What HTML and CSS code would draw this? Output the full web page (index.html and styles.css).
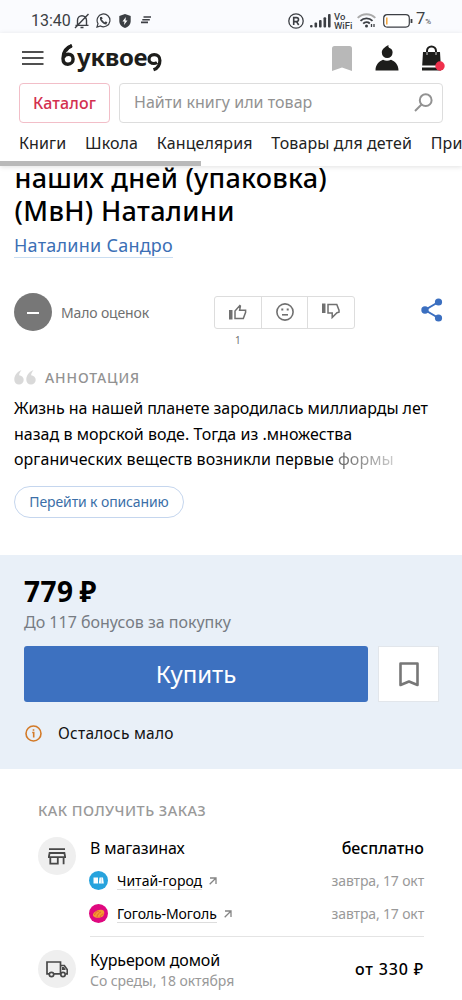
FILE: index.html
```html
<!DOCTYPE html>
<html lang="ru">
<head>
<meta charset="utf-8">
<meta name="viewport" content="width=device-width">
<title>Буквоед</title>
<link rel="stylesheet" href="styles.css">
</head>
<body>
<div class="status">
  <span class="clock">13:40</span>
  <svg class="st-bell" width="16" height="16" viewBox="0 0 16 16" fill="none" stroke="#3c3f44" stroke-width="1.4"><path d="M3.500 12V7.200a4.400 4.400 0 0 1 9 0V12M1.500 12.400h13M6.500 14.500h3M14.500 1 1 15"/></svg>
  <svg class="st-wa" width="15" height="15" viewBox="0 0 15 15" fill="none" stroke="#3c3f44" stroke-width="1.2"><path d="M1 14l1-3.400A6.400 6.400 0 1 1 4.500 13z"/><path d="M5 4.300c-.7 1.500.3 3.200 1.700 4.600s3 2 4.200 1.300M5 4.300l1 1.700M10.900 10.200 9.200 9" stroke-width="1.700"/></svg>
  <svg class="st-shield" width="12" height="14" viewBox="0 0 12 14"><path d="M6 0l5.700 2v5c0 3.500-2.500 6-5.700 7C2.800 13 .3 10.500.3 7V2z" fill="#3c3f44"/><path d="M6.800 3 3.500 7.500h2L5 11l3.500-4.500h-2z" fill="#fff"/></svg>
  <svg class="st-lines" width="10" height="8" viewBox="0 0 10 8" stroke="#3c3f44" stroke-width="1.600"><path d="M2.500 1H10M1.300 3.700h7.500M0 6.400h7"/></svg>
  <span class="st-space"></span>
  <svg class="st-r" width="16" height="16" viewBox="0 0 16 16" fill="none" stroke="#3c3f44" stroke-width="1.300"><circle cx="8" cy="8" r="7.200"/><path d="M5.700 12V4.600h2.800a2 2 0 0 1 0 4H5.700M8.500 8.600l2.200 3.400" stroke-width="1.600"/></svg>
  <svg class="st-signal" width="21" height="14" viewBox="0 0 21 14" fill="#3c3f44"><rect x="0" y="11" width="2.600" height="2.600" rx="1"/><rect x="4.500" y="8.500" width="2.600" height="5" rx="1"/><rect x="9" y="6" width="2.600" height="7.500" rx="1"/><rect x="13.500" y="3.200" width="2.600" height="10.300" rx="1"/><rect x="18" y="0" width="2.600" height="13.500" rx="1"/></svg>
  <span class="vowifi">Vo<br>WiFi</span>
  <svg class="st-wifi" width="19" height="15" viewBox="0 0 19 15" fill="none" stroke-width="1.900"><path d="M.7 4.800a12.500 12.500 0 0 1 17.600 0" stroke="#aaa"/><path d="M3.500 7.900a8.500 8.500 0 0 1 12 0M6.200 10.700a4.800 4.800 0 0 1 6.600-.2" stroke="#3c3f44"/><circle cx="9.500" cy="13" r="1.500" fill="#3c3f44"/><path d="M14.500 11v3M17 11v3" stroke="#3c3f44" stroke-width="1.300"/></svg>
  <svg class="st-bat" width="30" height="14" viewBox="0 0 30 14"><rect x=".7" y=".7" width="25.600" height="12.400" rx="3.500" fill="#fff" stroke="#3c3f44" stroke-width="1.200"/><path d="M3.800 3.500v7" stroke="#f2a33a" stroke-width="1.500"/><path d="M28.500 5v4" stroke="#3c3f44" stroke-width="1.800"/></svg>
  <span class="pct">7<small>%</small></span>
</div>

<header class="header">
  <div class="brand">
    <svg width="22" height="16" viewBox="0 0 22 16" stroke="#505050" stroke-width="2"><path d="M0 2h21.500M0 8h21.500M0 14h21.500"/></svg>
    <div class="logo" aria-label="буквоед"><svg width="15" height="25" viewBox="0 0 15 25" fill="none" stroke="#1d1d1b"><path d="M10.500 1.800C5 3.500 2 8.500 2 14.500c0 3.700 1.700 5.700 4.900 5.700s5.200-2.300 5.200-5.200-1.800-4.800-4.600-4.800C5.300 10.200 3.300 11.500 2.400 13.500" stroke-width="3.400"/><path d="M4.500 7Q7 3.200 11 1.500" stroke-width="3.200"/></svg><span>уквое</span><svg class="logo-d" width="15" height="25" viewBox="0 0 15 25" fill="none" stroke="#1d1d1b"><path d="M10 14.500C9 15.200 8 15.500 6.900 15.500 4 15.500 2 13.800 2 11.200s2-4.500 5.200-4.500c3.400 0 5.700 2.200 5.700 5.700 0 4.600-2.500 8-6.400 9.400" stroke-width="3.200"/></svg></div>
    <svg class="h-mark" width="20" height="25" viewBox="0 0 20 25"><path d="M0 2.500Q0 0 2.500 0h15Q20 0 20 2.500V25l-10-3.500L0 25z" fill="#b8b8b8"/></svg>
    <svg class="h-user" width="24" height="26" viewBox="0 0 24 26" fill="#1d1d1b"><path d="M13.500 0c-.5 1.800.2 2.600 1.500 3.300 2 1 2.600 2.500 2.600 4.300a5.300 5.300 0 0 1-10.800 0C6.800 4 9.800 2.200 13.500 0z"/><path d="M.5 25.500C.5 19.500 4 16.500 8 14.800q4 2 8 0c4 1.700 7.500 4.700 7.500 10.700z"/></svg>
    <svg class="h-bag" width="25" height="26" viewBox="0 0 25 26"><path d="M6 9V6a4.500 4.500 0 0 1 9 0v3" fill="none" stroke="#1d1d1b" stroke-width="2"/><path d="M2 7h17l.8 13.500H1.200zM1 22.500h19V25.500H1z" fill="#1d1d1b"/><circle cx="19" cy="21" r="4.700" fill="#f0304c"/><path d="M6 7v3M15 7v3" stroke="#fff" stroke-width=".8"/></svg>
  </div>
  <div class="searchrow">
    <a class="catalog">Каталог</a>
    <div class="search"><span>Найти книгу или товар</span><svg width="19" height="19" viewBox="0 0 19 19" fill="none" stroke="#929292" stroke-width="2"><circle cx="11.700" cy="7.200" r="5.900"/><path d="M7.500 11.500 1 18"/></svg></div>
  </div>
  <nav class="nav"><a>Книги</a><a>Школа</a><a>Канцелярия</a><a>Товары для детей</a><a>При</a></nav>
  <div class="scroll"><i></i></div>
</header>

<main>
  <section class="book">
    <h1><span class="ti1">наших дней (упаковка)</span><br><span class="ti2">(МвН) Наталини</span></h1>
    <a class="author">Наталини Сандро</a>
    <div class="rating">
      <div class="score"><i></i></div>
      <span class="few">Мало оценок</span>
      <div class="votes">
        <div class="vote"><svg width="18" height="16" viewBox="0 0 18 16" fill="none" stroke="#707070" stroke-width="1.500"><path d="M0 6h3.500v9.500H0z" fill="#707070" stroke="none"/><path d="M6 14.500V7l4.800-5.500.6.600-.8 4.200h6v2L14.300 14.500z"/></svg><small>1</small></div>
        <div class="vote"><svg width="18" height="18" viewBox="0 0 18 18" fill="none" stroke="#707070" stroke-width="1.600"><circle cx="9" cy="9" r="8.100"/><path d="M6 11.800h6"/><path d="M5.300 6.500h2M10.700 6.500h2" stroke-width="2"/></svg></div>
        <div class="vote down"><svg width="18" height="16" viewBox="0 0 18 16" fill="none" stroke="#707070" stroke-width="1.500"><path d="M0 .5h3.500V10H0z" fill="#707070" stroke="none"/><path d="M6 1.500V10h4.200v4.500L15 9.700l2-.5v-2L14.800 1.500z"/></svg></div>
      </div>
      <svg class="share" width="22" height="24" viewBox="0 0 22 24" fill="#3b6fc0"><path d="M17.500 4 4 12l13.500 8" fill="none" stroke="#3b6fc0" stroke-width="2"/><circle cx="17.500" cy="4" r="3.600"/><circle cx="4" cy="12" r="3.700"/><circle cx="17.500" cy="20" r="3.600"/></svg>
    </div>
    <h2 class="anno"><svg width="22" height="15" viewBox="0 0 22 15" fill="#d9d9d9"><path d="M7.500 0C3.500 1.500.3 5 .3 9.800a4.700 4.700 0 1 0 4.800-4.600C5.300 3.300 6.300 1.700 7.500 0z"/><path d="M19.500 0c-4 1.500-7.200 5-7.200 9.800a4.700 4.700 0 1 0 4.800-4.600C17.300 3.300 18.300 1.700 19.500 0z"/></svg><span>АННОТАЦИЯ</span></h2>
    <p class="text"><span class="p1">Жизнь на нашей планете зародилась миллиарды лет</span><br><span class="p2">назад в морской воде. Тогда из .множества</span><br><span class="p3">органических веществ возникли первые <span class="fade">формы</span></span></p>
    <a class="pill">Перейти к описанию</a>
  </section>

  <section class="offer">
    <div class="price"><span>779</span><span>₽</span></div>
    <div class="bonus">До 117 бонусов за покупку</div>
    <div class="buyrow">
      <a class="buy">Купить</a>
      <a class="keep"><svg width="20" height="25" viewBox="0 0 20 25" fill="none" stroke="#777" stroke-width="2.600"><path d="M1.500 1.500h17V23L10 19.500 1.500 23z" stroke-linejoin="round"/></svg></a>
    </div>
    <div class="left"><svg width="17" height="17" viewBox="0 0 17 17" fill="none" stroke="#d37a28" stroke-width="1.600"><circle cx="8.500" cy="8.500" r="7.500"/><path d="M7.200 7.500h1.500v5M8.500 4.200v1.600"/></svg><span>Осталось мало</span></div>
  </section>

  <section class="delivery">
    <h3>КАК ПОЛУЧИТЬ ЗАКАЗ</h3>
    <div class="way">
      <div class="ico"><svg width="18" height="17" viewBox="0 0 18 17" fill="none" stroke="#484848" stroke-width="1.800"><path d="M1 1.200h16M1.600 5h14.800l.8 4.200H.8zM2.300 9.200v6.500h7.500V9.200M15.600 9.200v7"/></svg></div>
      <div class="body shops">
        <div class="row main"><span class="w1">В магазинах</span><b class="c1">бесплатно</b></div>
        <div class="row shop"><svg class="sl" width="19" height="19" viewBox="0 0 19 19"><circle cx="9.500" cy="9.500" r="9.500" fill="#27a3dd"/><path d="M4.500 6.500H9V12.500H4.500zM9.800 12.500 10.500 6.500h3.500l.8 6z" fill="#fff"/><path d="M12.300 7v6" stroke="#8dcdec" stroke-width=".7"/></svg><a class="s1">Читай-город</a><svg class="arr" width="8" height="8" viewBox="0 0 8 8" fill="none" stroke="#858585" stroke-width="1.300"><path d="M1 1h6v6M7 1 .7 7.300"/></svg><span class="date">завтра, 17 окт</span></div>
        <div class="row shop"><svg class="sl" width="19" height="19" viewBox="0 0 19 19"><circle cx="9.500" cy="9.500" r="9.500" fill="#df087f"/><path d="M4 11.500C3.500 8.500 8.500 5 12.500 5.800c3.500.5 3.300 4 1.700 6.200-2 2.500-9.200 2.500-10.200-.5z" fill="#f39a32"/><path d="M5.500 11c1-3 3-4.500 4.500-3.500M8 13c0-2 2-4.500 4-5M11 13c1-2 2-3 3.500-3" stroke="#df552f" stroke-width=".8" fill="none"/></svg><a class="s2">Гоголь-Моголь</a><svg class="arr" width="8" height="8" viewBox="0 0 8 8" fill="none" stroke="#858585" stroke-width="1.300"><path d="M1 1h6v6M7 1 .7 7.300"/></svg><span class="date">завтра, 17 окт</span></div>
      </div>
    </div>
    <div class="way second">
      <div class="ico"><svg width="22" height="17" viewBox="0 0 22 17" fill="none" stroke="#484848" stroke-width="1.700"><path d="M3 12.800H1V1h13.500v11.800H8M14.500 4.500h3.800l3 4.300v4H20"/><path d="M16 6h2l1.800 3H16z" fill="#484848" stroke="none"/><circle cx="5.500" cy="13.500" r="2.200"/><circle cx="17" cy="13.500" r="2.200"/></svg></div>
      <div class="body courier">
        <div><div class="w2">Курьером домой</div><div class="w3">Со среды, 18 октября</div></div>
        <b class="c2">от 330 ₽</b>
      </div>
    </div>
  </section>
</main>
</body>
</html>
```
FILE: styles.css
```css
* { box-sizing: border-box; }
body { margin: 0; width: 462px; height: 1000px; overflow: hidden; background: #fff; color: #111; font-family: "Noto Sans", sans-serif; }
svg { display: block; flex: none; }
span, a, b { white-space: nowrap; }

.status { height: 33px; padding: 8px 0 0 31px; background: #fafbfe; display: flex; align-items: center; color: #3c3f44; font-family: Roboto, sans-serif; }
.clock { width: 43px; font-size: 16px; }
.st-wa { margin-left: 6px; }
.st-shield { margin-left: 8px; }
.st-lines { margin-left: 10px; margin-top: -1px; }
.st-space { flex: 1; }
.st-signal { margin-left: 6px; }
.vowifi { margin-left: 3px; width: 19px; font: 500 9.500px/9px Roboto, sans-serif; }
.st-wifi { margin-left: 4px; }
.st-bat { margin-left: 7px; }
.pct { width: 49px; padding-left: 3px; font-size: 16.500px; line-height: 20px; }
.pct small { font-size: 8px; }

.header { position: relative; z-index: 1; height: 133px; background: #fff; box-shadow: 0 1px 5px rgba(0,0,0,.12); }
.brand { height: 50px; padding-left: 22px; display: flex; align-items: center; }
.logo { display: flex; align-items: flex-start; margin-left: 17px; width: 104px; height: 30px; padding-top: 1px; color: #1d1d1b; font-size: 24px; font-weight: 700; line-height: 30px; }
.logo span { margin: -2px 0 0 1px; letter-spacing: -.3px; }
.logo-d { margin-top: 4px; }
.h-mark { margin-left: 167px; }
.h-user { margin-left: 23px; }
.h-bag { margin-left: 22px; }
.searchrow { display: flex; gap: 9px; padding-left: 19px; }
.catalog { width: 91px; height: 40px; border: 1px solid #f2bec8; border-radius: 4px; color: #d3304f; font-size: 16px; font-weight: 500; letter-spacing: .12px; line-height: 38px; text-align: center; }
.search { width: 324px; height: 40px; border: 1px solid #ddd; border-radius: 4px; padding: 0 9px 2px 14px; display: flex; justify-content: space-between; align-items: center; color: #929292; font-size: 16px; letter-spacing: .03px; }
.nav { height: 38px; padding-left: 19px; display: flex; gap: 18.800px; font-size: 16px; letter-spacing: .1px; line-height: 40px; color: #222; }
.scroll { height: 5px; }
.scroll i { display: block; width: 201px; height: 5px; background: #b9b9b9; }

.book { height: 389px; padding-left: 14px; overflow: hidden; }
h1 { margin: -5px 0 0; padding-left: .5px; font-size: 27px; font-weight: 500; line-height: 33px; color: #000; }
.ti1 { letter-spacing: .24px; }
.ti2 { letter-spacing: .34px; }
.author { display: inline-block; margin-top: 6px; height: 25px; border-bottom: 1px solid #c9ddf1; color: #3b6fb5; font-size: 18px; letter-spacing: .24px; line-height: 25px; }
.rating { height: 38px; margin-top: 35px; display: flex; align-items: center; }
.score { width: 38px; height: 38px; border-radius: 50%; background: #777; display: flex; align-items: center; justify-content: center; }
.score i { width: 12px; height: 2px; margin-top: 2px; background: #fff; }
.few { width: 153px; margin-left: 9px; font-size: 14px; letter-spacing: -.15px; color: #707070; }
.votes { width: 141px; height: 33px; border: 1px solid #ddd; border-radius: 3px; display: flex; }
.vote { position: relative; flex: 1; border-right: 1px solid #ddd; display: flex; align-items: center; justify-content: center; }
.vote:last-child { border: 0; }
.vote small { position: absolute; top: 37px; font-size: 10px; line-height: 13px; color: #707070; }
.down svg { margin-top: -2px; }
.share { margin: -4px 0 0 66px; }
.anno { display: flex; align-items: center; gap: 9px; height: 20px; margin: 36px 0 0; color: #929292; font-size: 14px; font-weight: 500; letter-spacing: .9px; }
.text { margin: 9px 0 0; font-size: 16px; line-height: 25.600px; color: #000; }
.p1 { letter-spacing: -.04px; }
.p2 { letter-spacing: .02px; }
.p3 { letter-spacing: .06px; }
.fade { background: linear-gradient(90deg, #666, #ccc); -webkit-background-clip: text; color: transparent; }
.pill { margin-top: 13px; width: 170px; height: 32px; border: 1px solid #c5d6ee; border-radius: 16px; display: block; color: #3b6fa8; font-size: 14px; letter-spacing: -.12px; line-height: 30px; text-align: center; }

.offer { height: 214px; padding: 18px 23px 0 24px; background: #e9f0f8; }
.price { display: flex; gap: 6px; height: 36px; font-size: 28px; font-weight: 700; line-height: 36px; letter-spacing: .5px; color: #000; }
.bonus { height: 26px; font-size: 16px; line-height: 26px; color: #777c83; }
.buyrow { display: flex; gap: 10px; margin-top: 11px; }
.buy { width: 344px; height: 56px; border-radius: 3px; background: #3d71c0; color: #fff; font-size: 24px; line-height: 56px; text-align: center; }
.keep { width: 61px; height: 56px; border: 1px solid #e2e6eb; background: #fff; display: flex; align-items: center; justify-content: center; }
.left { display: flex; align-items: center; gap: 16px; height: 24px; margin: 19px 0 0 1px; font-size: 15.500px; letter-spacing: .25px; color: #111; }

.delivery { padding: 29px 38px 0; }
h3 { margin: 0; height: 24px; font-size: 14.500px; font-weight: 500; letter-spacing: .45px; line-height: 24px; color: #999; }
.way { display: flex; margin-top: 15px; }
.ico { width: 38px; height: 38px; border-radius: 50%; background: #efefef; display: flex; align-items: center; justify-content: center; flex: none; }
.body { width: 334px; margin-left: 14px; }
.shops { height: 100px; border-bottom: 1px solid #e4e4e4; }
.row { display: flex; align-items: center; }
.main { height: 22px; justify-content: space-between; font-size: 16px; color: #000; }
.main b { font-weight: 500; }
.w1, .w2 { letter-spacing: -.13px; }
.shop { height: 33px; font-size: 14px; color: #000; }
.main + .shop { margin-top: 5px; }
.sl { margin-left: -1px; }
.shop a { margin-left: 9px; line-height: 17px; border-bottom: 1px solid #ddd; }
.s2 { letter-spacing: -.08px; }
.arr { margin-left: 7px; }
.date { margin-left: auto; letter-spacing: -.15px; color: #999; }
.second { margin-top: 13px; }
.courier { display: flex; justify-content: space-between; color: #000; font-size: 16px; line-height: 22px; }
.courier > div { margin-top: -1px; }
.c2 { margin-top: 8px; font-weight: 500; letter-spacing: .85px; }
.w3 { font-size: 14px; line-height: 20px; letter-spacing: -.05px; color: #999; }
```
